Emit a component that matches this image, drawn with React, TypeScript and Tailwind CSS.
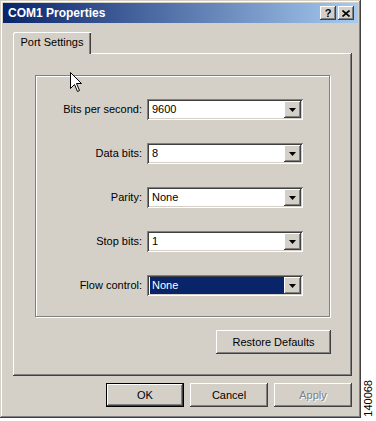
import React from "react";

const raised =
  "shadow-[inset_-1px_-1px_#404040,inset_1px_1px_#ffffff,inset_-2px_-2px_#808080,inset_2px_2px_#d4d0c8]";
const sunken =
  "shadow-[inset_1px_1px_#808080,inset_-1px_-1px_#ffffff,inset_2px_2px_#404040,inset_-2px_-2px_#d4d0c8]";

function Arrow() {
  return (
    <svg width="7" height="4" viewBox="0 0 7 4">
      <polygon points="0,0 7,0 3.5,4" fill="#000" />
    </svg>
  );
}

function Combo({ value, selected }: { value: string; selected?: boolean }) {
  return (
    <div className={`w-[156px] h-[21px] bg-white flex items-center pl-[2px] pr-[2px] ml-[5px] ${sunken}`}>
      <div
        className={`flex-1 h-[17px] flex items-center pl-[2px] ml-[1px] ${
          selected ? "bg-[#0a246a] text-white" : "text-black"
        }`}
      >
        {value}
      </div>
      <div className={`w-[17px] h-[17px] bg-[#d4d0c8] flex items-center justify-center ${raised}`}>
        <Arrow />
      </div>
    </div>
  );
}

function Row({ label, value, selected }: { label: string; value: string; selected?: boolean }) {
  return (
    <div className="flex items-center justify-end pr-[26px]">
      <span>{label}</span>
      <Combo value={value} selected={selected} />
    </div>
  );
}

function Btn({ label, wide, isDefault, disabled }: { label: string; wide?: boolean; isDefault?: boolean; disabled?: boolean }) {
  const w = wide ? "w-[115px]" : "w-[78px]";
  if (isDefault) {
    return (
      <div className={`${w} h-[24px] border border-black`}>
        <div className={`w-full h-full flex items-center justify-center bg-[#d4d0c8] ${raised}`}>{label}</div>
      </div>
    );
  }
  return (
    <div
      className={`${w} h-[24px] flex items-center justify-center bg-[#d4d0c8] ${raised} ${
        disabled ? "text-[#808080] [text-shadow:1px_1px_0_#ffffff]" : ""
      }`}
    >
      {label}
    </div>
  );
}

export default function App() {
  const rows = [
    { label: "Bits per second:", value: "9600" },
    { label: "Data bits:", value: "8" },
    { label: "Parity:", value: "None" },
    { label: "Stop bits:", value: "1" },
    { label: "Flow control:", value: "None", selected: true },
  ];

  return (
    <div className="w-[376px] h-[421px] bg-white flex font-['Liberation_Sans',Arial,sans-serif] text-[11px] text-black">
      <div
        className={`relative w-[361px] h-[418px] bg-[#d4d0c8] p-[3px] flex flex-col shadow-[inset_-1px_-1px_#404040,inset_1px_1px_#d4d0c8,inset_-2px_-2px_#808080,inset_2px_2px_#ffffff]`}
      >
        {/* title bar */}
        <div className="h-[20px] flex items-center pl-[5px] pr-[4px] bg-[linear-gradient(to_right,#0a246a,#a6caf0)]">
          <span className="text-white font-bold text-[12px]">COM1 Properties</span>
          <div className="ml-auto flex gap-[2px]">
            <div className={`w-[16px] h-[14px] bg-[#d4d0c8] flex items-center justify-center ${raised}`}>
              <span className="font-bold text-[11px] leading-none mt-[1px]">?</span>
            </div>
            <div className={`w-[16px] h-[14px] bg-[#d4d0c8] flex items-center justify-center ${raised}`}>
              <svg width="8" height="7" viewBox="0 0 8 7">
                <path d="M0.5 0.5L7.5 6.5M7.5 0.5L0.5 6.5" stroke="#000" strokeWidth="1.6" />
              </svg>
            </div>
          </div>
        </div>

        <div className="pt-[9px] pl-[10px] pr-[6px] flex flex-col">
          {/* tab */}
          <div className="relative z-10 -mb-[1px] w-[78px] h-[22px] bg-[#d4d0c8] rounded-tl-[2px] flex items-center justify-center pb-[2px] shadow-[inset_1px_1px_#ffffff,inset_-1px_0_#404040,inset_-2px_0_#808080]">
            Port Settings
          </div>

          {/* tab panel */}
          <div className={`h-[323px] p-[22px] flex flex-col ${raised}`}>
            <div className="h-[244px] border border-[#808080] shadow-[inset_1px_1px_#ffffff,1px_1px_#ffffff] flex flex-col gap-[23px] pt-[23px]">
              {rows.map((r) => (
                <Row key={r.label} label={r.label} value={r.value} selected={r.selected} />
              ))}
            </div>
            <div className="mt-[13px] flex justify-end -mr-[1px]">
              <Btn label="Restore Defaults" wide />
            </div>
          </div>

          {/* dialog buttons */}
          <div className="mt-[7px] flex justify-end gap-[6px]">
            <Btn label="OK" isDefault />
            <Btn label="Cancel" />
            <Btn label="Apply" disabled />
          </div>
        </div>

        {/* mouse cursor */}
        <svg className="absolute left-[70px] top-[72px]" width="13" height="21" viewBox="0 0 13 21">
          <path
            d="M0.5 0.5L0.5 16.5L4.5 12.5L7.5 19.5L9.5 18.5L6.5 11.5L11.5 11.5Z"
            fill="#ffffff"
            stroke="#000000"
            strokeWidth="1"
          />
        </svg>
      </div>

      <div className="flex-1 flex items-end justify-center pb-[4px]">
        <span className="[writing-mode:vertical-rl] rotate-180 text-[11px] leading-none">140068</span>
      </div>
    </div>
  );
}
